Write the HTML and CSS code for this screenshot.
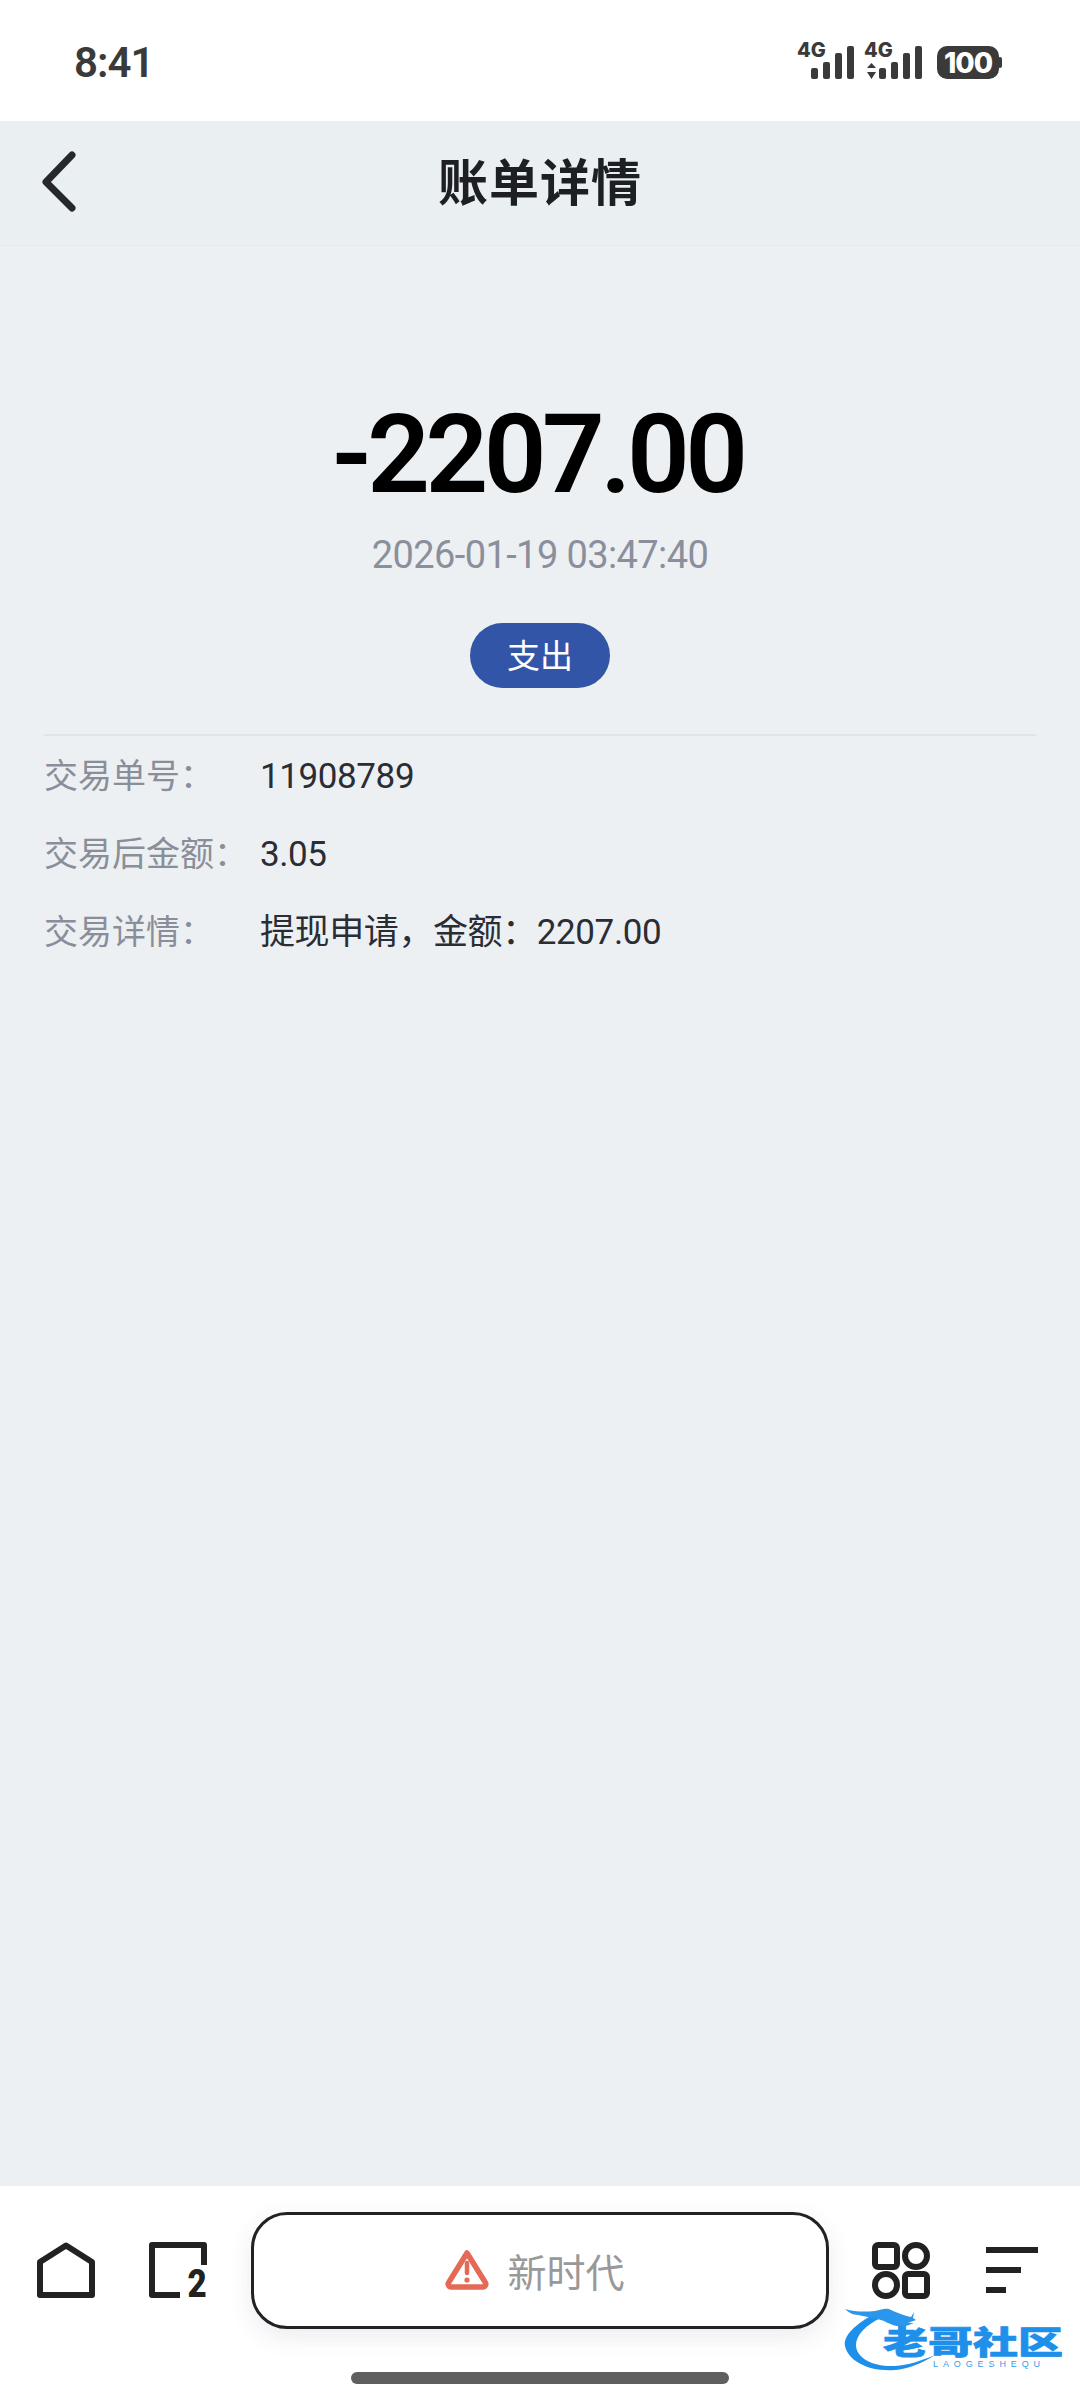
FILE: index.html
```html
<!DOCTYPE html>
<html lang="zh-CN">
<head>
<meta charset="utf-8">
<title>账单详情</title>
<link rel="stylesheet" href="styles.css">
</head>
<body>
<div class="screen">
  <div class="statusbar">
    <span class="time">8:41</span>
    <svg class="status-icons" width="210" height="46" viewBox="0 -6 210 46">
      <text x="1" y="15" class="net">4G</text>
      <g fill="#3a3a3a">
        <rect x="15" y="26" width="7" height="11" rx="2"/><rect x="27" y="20" width="7" height="17" rx="2"/><rect x="39" y="11" width="7" height="26" rx="2"/><rect x="51" y="4" width="7" height="33" rx="2"/>
      </g>
      <text x="68" y="15" class="net">4G</text>
      <g fill="#3a3a3a">
        <path d="M71 26l4.500-5 4.500 5zM71 30h9l-4.500 7z"/>
        <rect x="83" y="26" width="7" height="11" rx="2"/><rect x="95" y="20" width="7" height="17" rx="2"/><rect x="107" y="11" width="7" height="26" rx="2"/><rect x="119" y="4" width="7" height="33" rx="2"/>
        <rect x="141" y="4" width="62" height="33" rx="10"/><rect x="202" y="15" width="4" height="11" rx="2"/>
      </g>
      <text x="172" y="31" class="batt">100</text>
    </svg>
  </div>

  <header class="navbar">
    <svg class="back" width="37" height="66" viewBox="0 0 37 66"><path d="M31 4L5 31l26 26" fill="none" stroke="#26282c" stroke-width="7" stroke-linecap="round" stroke-linejoin="round"/></svg>
    <h1 class="title">账单详情</h1>
  </header>

  <main class="content">
    <section class="summary">
      <div class="amount">-2207.00</div>
      <div class="date">2026-01-19 03:47:40</div>
      <div class="tag">支出</div>
    </section>
    <section class="details">
      <div class="row"><span class="label">交易单号：</span><span class="value">11908789</span></div>
      <div class="row"><span class="label">交易后金额：</span><span class="value">3.05</span></div>
      <div class="row"><span class="label">交易详情：</span><span class="value">提现申请，金额：2207.00</span></div>
    </section>
  </main>

  <footer class="toolbar">
    <div class="tools">
      <svg class="tool" width="60" height="57" viewBox="0 0 60 57"><path d="M30 3.500L56 20V53H4V20Z" fill="none" stroke="#222" stroke-width="6" stroke-linejoin="round"/></svg>
      <div class="tabs">
        <svg width="58" height="57" viewBox="0 0 58 57"><path d="M31 53H3V3H55V23" fill="none" stroke="#222" stroke-width="6" stroke-linejoin="round"/></svg>
        <span class="tabs-count">2</span>
      </div>
      <div class="address">
        <svg width="44" height="42" viewBox="0 0 44 42"><path d="M22 4L40 33a3 3 0 0 1-2.500 5H6.500a3 3 0 0 1-2.500-5Z" fill="none" stroke="#e46a56" stroke-width="5.500" stroke-linejoin="round"/><path d="M22 14v10" stroke="#e46a56" stroke-width="4.500" stroke-linecap="round"/><circle cx="22" cy="31" r="2.600" fill="#e46a56"/></svg>
        <span class="site">新时代</span>
      </div>
      <svg class="tool grid" width="58" height="57" viewBox="0 0 58 57">
        <g fill="none" stroke="#222" stroke-width="6">
          <rect x="3" y="3" width="22" height="22" rx="3"/><circle cx="44" cy="14" r="11"/>
          <circle cx="14" cy="43" r="11"/><rect x="33" y="32" width="22" height="22" rx="3"/>
        </g>
      </svg>
      <div class="menu"><i class="l1"></i><i class="l2"></i><i class="l3"></i></div>
    </div>
    <div class="indicator"></div>
    <div class="watermark">
      <svg class="dragon" width="110" height="72" viewBox="0 0 110 72">
        <path d="M33 7C12 18 0 30 2 40c3 15 24 26 50 24 12-1 26-6 40-15-14 6-27 10-40 11C30 61 13 52 13 39 13 30 22 19 38 12Z" fill="#1e90ea"/>
        <path d="M2 3c10 3 20 3 30 2 8-2 12-4 18 0 6 2 12 5 18 6l3-5-1 6 3 2-8 3 6 0-8 3c-8 2-16-2-22-5-8-3-18-4-26-6C10 9 5 6 2 3Z" fill="#2a97ec"/>
      </svg>
      <div class="wm-name">老哥社区</div>
      <div class="wm-sub">LAOGESHEQU</div>
    </div>
  </footer>
</div>
</body>
</html>
```

FILE: styles.css
```css
* { box-sizing: border-box; margin: 0; padding: 0; }
html, body { width: 1080px; height: 2400px; overflow: hidden; background: #fff; }
body { font-family: "Roboto", "Noto Sans CJK SC", sans-serif; }
.screen { display: flex; flex-direction: column; width: 1080px; height: 2400px; }

.statusbar { height: 121px; background: #fff; display: flex; justify-content: space-between; align-items: flex-start; padding: 0 74px; }
.time { margin-top: 37px; font-size: 42px; line-height: 52px; font-weight: 600; color: #3a3a3a; letter-spacing: -1px; }
.status-icons { margin-top: 36px; }
.net { font-family: "Inter", sans-serif; font-size: 20px; font-weight: 800; fill: #3a3a3a; }
.batt { font-family: "Inter", sans-serif; font-size: 28px; font-weight: 800; fill: #fff; text-anchor: middle; letter-spacing: -1px; }

.navbar { height: 125px; background: #eaeff2; border-bottom: 1px solid #e4e9ed; display: flex; align-items: center; justify-content: center; position: relative; }
.back { position: absolute; left: 41px; top: 30px; }
.title { font-family: "Noto Sans CJK SC", sans-serif; font-size: 50px; font-weight: 700; color: #1d1f23; letter-spacing: 1px; margin-top: -9px; }

.content { flex: 1; background: #edf0f3; padding: 0 44px; }
.summary { display: flex; flex-direction: column; align-items: center; padding-top: 144px; border-bottom: 2px solid #e0e3e7; height: 490px; }
.amount { font-size: 110px; line-height: 130px; font-weight: 600; color: #000; letter-spacing: -4.600px; margin-right: 5px; }
.date { font-size: 38px; line-height: 44px; color: #8b8f9c; margin-top: 13px; letter-spacing: -.600px; }
.tag { margin-top: 46px; width: 140px; height: 65px; border-radius: 33px; background: #3255a8; color: #fff; font-family: "Noto Sans CJK SC", sans-serif; font-size: 33px; line-height: 63px; text-align: center; }

.details { display: flex; flex-direction: column; gap: 26px; padding-top: 15px; }
.row { display: flex; height: 52px; align-items: center; font-size: 35px; line-height: 52px; }
.label { width: 216px; flex: none; color: #8a8e99; font-family: "Noto Sans CJK SC", sans-serif; font-size: 34px; margin-top: -6px; }
.value { color: #2a2d33; letter-spacing: -.400px; margin-top: -1px; }

.toolbar { height: 214px; background: #fff; position: relative; display: flex; flex-direction: column; }
.tools { display: flex; align-items: center; height: 168px; padding-left: 36px; }
.tool { flex: none; }
.tabs { position: relative; width: 58px; height: 57px; margin-left: 53px; flex: none; }
.tabs-count { position: absolute; right: 0; bottom: -5px; font-family: "Roboto", sans-serif; font-size: 39px; line-height: 39px; font-weight: 900; color: #222; transform: scaleX(.85); transform-origin: right bottom; }
.address { width: 578px; height: 117px; margin-left: 44px; flex: none; border: 3px solid #222; border-radius: 36px; background: #fff; box-shadow: 0 8px 24px rgba(60, 70, 110, .10); display: flex; align-items: center; justify-content: center; gap: 18px; padding-right: 10px; }
.site { font-family: "Noto Sans CJK SC", sans-serif; font-size: 39px; color: #999; }
.grid { margin-left: 43px; }
.menu { display: flex; flex-direction: column; gap: 14px; margin-left: 56px; width: 52px; flex: none; }
.menu i { display: block; height: 6px; background: #222; }
.menu .l1 { width: 52px; }
.menu .l2 { width: 35px; }
.menu .l3 { width: 20px; }
.indicator { width: 378px; height: 12px; margin: 18px auto 0; border-radius: 6px; background: #5f5f5f; }

.watermark { position: absolute; left: 842px; top: 120px; width: 238px; height: 72px; }
.dragon { position: absolute; left: 1px; top: 0; }
.wm-name { position: absolute; left: 41px; top: 19px; font-family: "Noto Sans CJK SC", sans-serif; font-size: 45px; line-height: 45px; font-weight: 900; color: #1e90ea; white-space: nowrap; transform: scaleY(.7); transform-origin: left top; -webkit-text-stroke: 1px #1e90ea; }
.wm-sub { position: absolute; left: 91px; top: 54px; font-family: "Liberation Sans", sans-serif; font-size: 9px; line-height: 9px; letter-spacing: 4.900px; color: #3a9ae8; white-space: nowrap; }
```
